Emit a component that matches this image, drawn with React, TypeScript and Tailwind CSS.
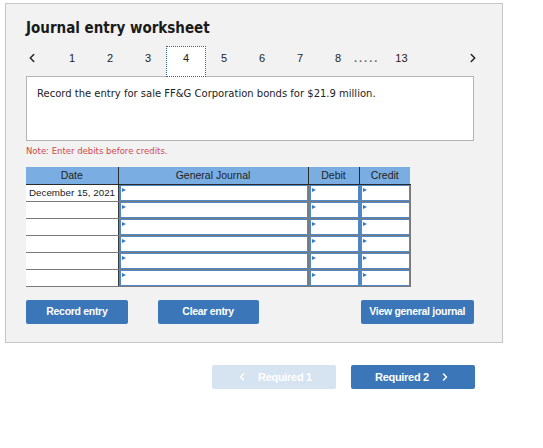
import { ChevronLeft, ChevronRight } from 'lucide-react';

const TABS = [1, 2, 3, 4, 5, 6, 7, 8];
const ROWS = ['December 15, 2021', '', '', '', '', ''];

// small blue flag in the corner of each input
function Flag() {
  return <span className="absolute left-[1px] top-[2px] w-0 h-0 border-y-[2.5px] border-y-transparent border-l-[4px] border-l-[#3b78c3]" />;
}

function InputCell() {
  return (
    <td className="p-0 border border-[#7a7a7a] bg-white">
      <div className="relative h-[16px] border border-[#5088c8] border-l-2">
        <Flag />
      </div>
    </td>
  );
}

export default function App() {
  return (
    <div className="w-[543px] h-[448px] bg-white pt-[3px] pl-[5px] font-['Liberation_Sans',Arial,sans-serif] text-[#222]">
      {/* worksheet panel */}
      <div className="w-[498px] h-[340px] border border-[#c6c6c6] bg-[#f2f2f2] pl-[20px] pr-[28px] pt-[14px]">
        <h1 className="font-['DejaVu_Sans_Condensed','DejaVu_Sans',Verdana,sans-serif] font-bold text-[15px] leading-[20px] text-[#1a1a1a]">
          Journal entry worksheet
        </h1>

        {/* tabs */}
        <div className="flex items-stretch h-[31px] mt-[8px] text-[11px] text-[#222]">
          <div className="w-[27px] flex items-center pb-[7px]">
            <ChevronLeft size={14} strokeWidth={2.5} className="-ml-[1px] text-[#222]" />
          </div>
          {TABS.map(n =>
            n === 4 ? (
              <div key={n} className="w-[40px] -mx-[1px] flex items-center justify-center pb-[6px] bg-white border border-dotted border-[#2f5fa0] relative z-10">
                {n}
              </div>
            ) : (
              <div key={n} className="w-[38px] flex items-center justify-center pb-[6px]">{n}</div>
            )
          )}
          <div className="flex items-center pb-[6px] -ml-[3px] tracking-[2px] font-bold text-[#666]">.....</div>
          <div className="flex items-center pb-[6px] ml-[16px]">13</div>
          <div className="flex items-center pb-[7px] ml-auto -mr-[6px]">
            <ChevronRight size={14} strokeWidth={2.5} className="text-[#222]" />
          </div>
        </div>

        {/* question box */}
        <div className="-mt-[1px] h-[65px] border border-[#b5b5b5] bg-white pl-[10px] pt-[9px] font-['DejaVu_Sans',Verdana,sans-serif] text-[10px] text-[#222]">
          Record the entry for sale FF&amp;G Corporation bonds for $21.9 million.
        </div>

        <p className="mt-[4px] font-['DejaVu_Sans',Verdana,sans-serif] text-[8.5px] text-[#d0494b]">
          Note: Enter debits before credits.
        </p>

        {/* journal table */}
        <table className="mt-[9px] border-collapse text-[10.5px] w-[384px] table-fixed">
          <thead>
            <tr className="h-[18px] bg-[#7aaee3] text-[#222]">
              <th className="w-[92px] font-normal border-r border-b border-[#2a2a2a]">Date</th>
              <th className="w-[190px] font-normal border-r border-b border-[#2a2a2a]">General Journal</th>
              <th className="w-[51px] font-normal border-r border-b border-[#2a2a2a]">Debit</th>
              <th className="w-[51px] font-normal border-b border-[#2a2a2a]">Credit</th>
            </tr>
          </thead>
          <tbody>
            {ROWS.map((d, i) => (
              <tr key={i} className="h-[17px]">
                <td className="p-0 pl-[3px] bg-white border-b border-r border-b-[#7a7a7a] border-r-[#3a3a3a] whitespace-nowrap overflow-hidden text-[9.8px]">
                  {d}
                </td>
                <InputCell />
                <InputCell />
                <InputCell />
              </tr>
            ))}
          </tbody>
        </table>

        {/* actions */}
        <div className="flex mt-[13px] text-[10.5px] font-bold tracking-[-0.3px] text-white">
          <button className="w-[104px] h-[24px] rounded-[2px] bg-[#3a76b8]">Record entry</button>
          <button className="ml-[30px] w-[103px] h-[24px] rounded-[2px] bg-[#3a76b8]">Clear entry</button>
          <button className="ml-[102px] w-[116px] h-[24px] rounded-[2px] bg-[#3a76b8]">View general journal</button>
        </div>
      </div>

      {/* requirement navigation */}
      <div className="flex mt-[22px] ml-[207px] text-[11px] font-bold tracking-[-0.3px] text-white">
        <button className="w-[124px] h-[24px] rounded-[2px] bg-[#d6e3f1] flex items-center justify-center gap-[10px]">
          <ChevronLeft size={12} strokeWidth={3} /> Required 1
        </button>
        <button className="ml-[15px] w-[124px] h-[24px] rounded-[2px] bg-[#3a76b8] flex items-center justify-center gap-[10px]">
          Required 2 <ChevronRight size={12} strokeWidth={3} />
        </button>
      </div>
    </div>
  );
}
